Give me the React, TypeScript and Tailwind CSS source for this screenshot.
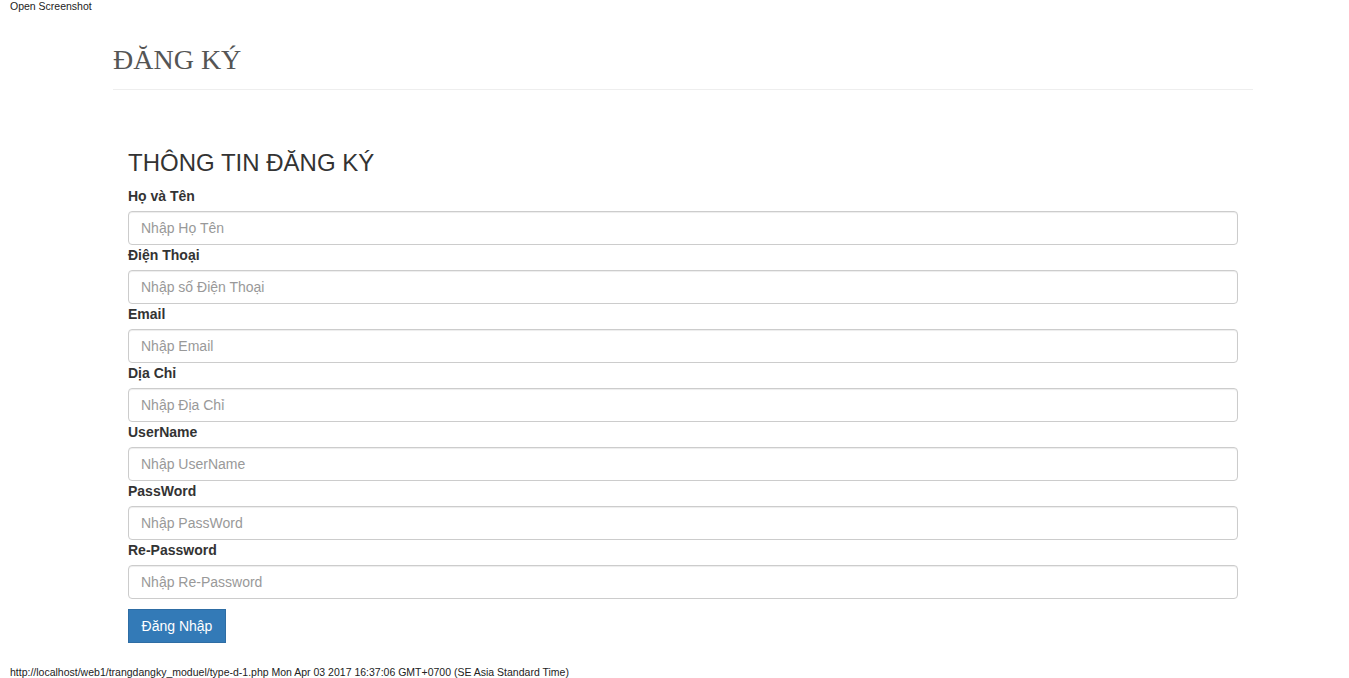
const FIELDS = [
  { label: "Họ và Tên", placeholder: "Nhập Họ Tên", type: "text" },
  { label: "Điện Thoại", placeholder: "Nhập số Điện Thoại", type: "text" },
  { label: "Email", placeholder: "Nhập Email", type: "email" },
  { label: "Dịa Chỉ", placeholder: "Nhập Địa Chỉ", type: "text" },
  { label: "UserName", placeholder: "Nhập UserName", type: "text" },
  { label: "PassWord", placeholder: "Nhập PassWord", type: "password" },
  { label: "Re-Password", placeholder: "Nhập Re-Password", type: "password" },
];

export default function App() {
  return (
    <div className="relative min-h-[678px] bg-white text-[#333] font-['Liberation_Sans',Arial,sans-serif]">
      {/* screenshot tool caption */}
      <div className="absolute left-[10px] top-0 text-[10.5px] leading-[12px] text-[#222]">Open Screenshot</div>

      <div className="ml-[113px] w-[1140px] pt-[40px]">
        {/* page header */}
        <div className="border-b border-[#eee] pb-[9px]">
          <h1 className="font-['Liberation_Serif','Times_New_Roman',serif] text-[28px] leading-[40px] text-[#555]">
            ĐĂNG KÝ
          </h1>
        </div>

        {/* form */}
        <form className="mt-[60px] px-[15px]" onSubmit={(e) => e.preventDefault()}>
          <h3 className="text-[24px] leading-[26px] mb-[10px]">THÔNG TIN ĐĂNG KÝ</h3>
          {FIELDS.map((f) => (
            <div key={f.label}>
              <label className="block text-[14px] leading-[20px] font-bold mb-[5px]">{f.label}</label>
              <input
                type={f.type}
                placeholder={f.placeholder}
                className="block w-full h-[34px] px-[12px] text-[14px] border border-[#ccc] rounded-[4px] shadow-[inset_0_1px_1px_rgba(0,0,0,0.075)] placeholder:text-[#999] outline-none"
              />
            </div>
          ))}
          <button
            type="submit"
            className="mt-[10px] h-[34px] w-[98px] bg-[#337ab7] border border-[#2e6da4] text-white text-[14px]"
          >
            Đăng Nhập
          </button>
        </form>
      </div>

      <div className="absolute left-[10px] top-[666px] text-[10.5px] leading-[12px] text-[#222]">
        http://localhost/web1/trangdangky_moduel/type-d-1.php Mon Apr 03 2017 16:37:06 GMT+0700 (SE Asia Standard Time)
      </div>
    </div>
  );
}
